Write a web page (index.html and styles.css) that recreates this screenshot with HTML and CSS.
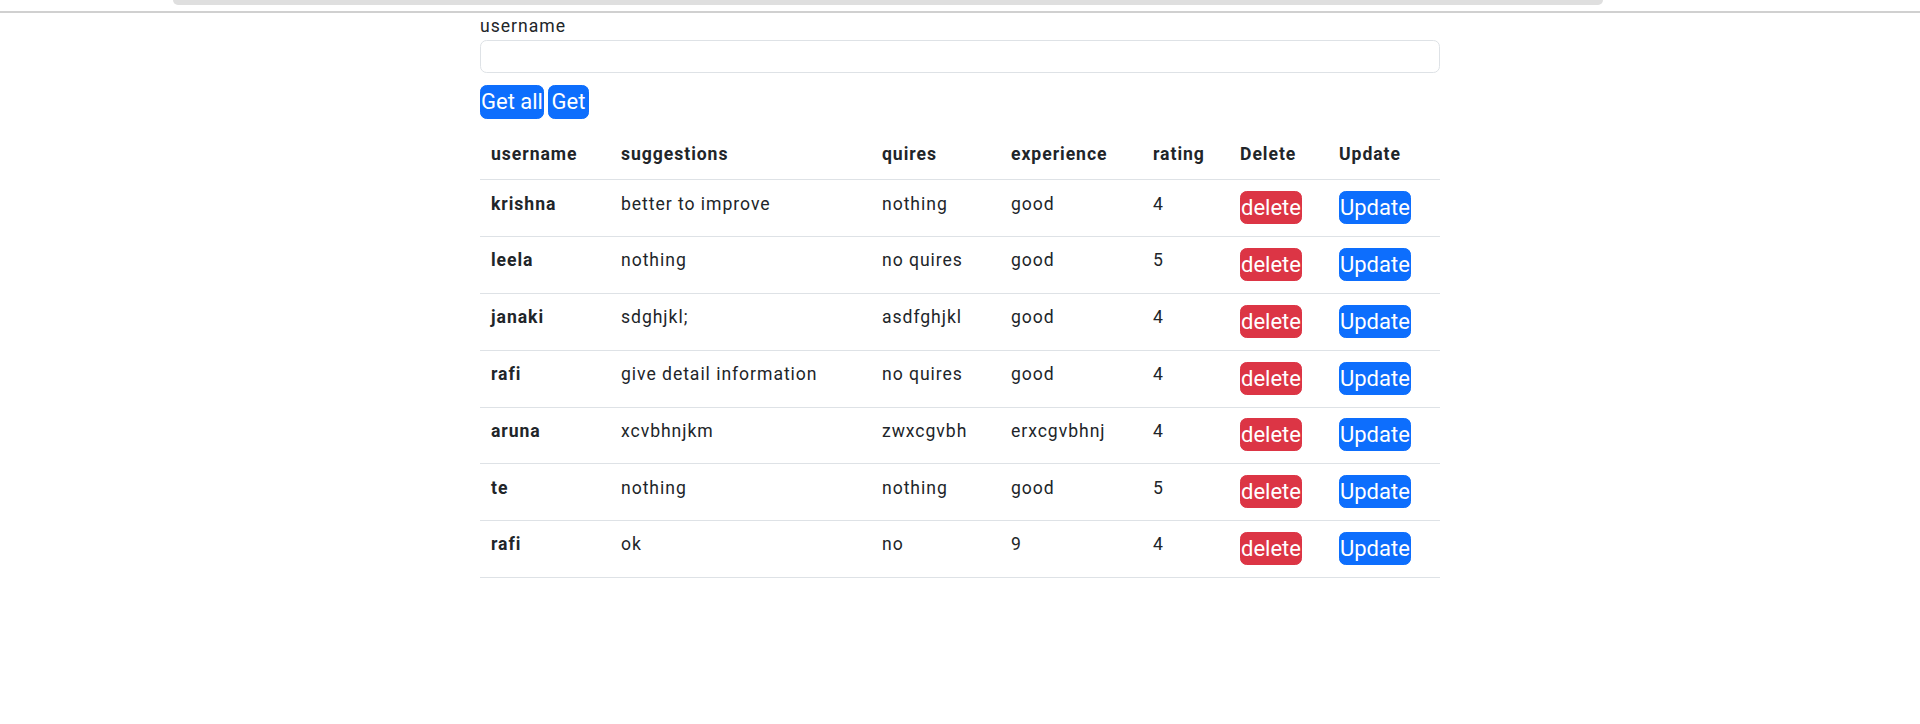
FILE: index.html
```html
<!DOCTYPE html>
<html lang="en">
<head>
<meta charset="utf-8">
<title>Feedback</title>
<link rel="stylesheet" href="styles.css">
</head>
<body>
<div class="topbar"></div>
<div class="rule"></div>
<main class="container">
  <label class="field-label" for="username">username</label>
  <input class="field-input" id="username" type="text">
  <div class="actions">
    <button class="btn btn-blue btn-wide">Get all</button>
    <button class="btn btn-blue btn-get">Get</button>
  </div>
  <table class="data">
    <colgroup>
      <col class="c1"><col class="c2"><col class="c3"><col class="c4"><col class="c5"><col class="c6"><col class="c7">
    </colgroup>
    <thead>
      <tr><th>username</th><th>suggestions</th><th>quires</th><th>experience</th><th>rating</th><th>Delete</th><th>Update</th></tr>
    </thead>
    <tbody>
      <tr><th>krishna</th><td>better to improve</td><td>nothing</td><td>good</td><td>4</td><td><button class="btn btn-red">delete</button></td><td><button class="btn btn-blue">Update</button></td></tr>
      <tr><th>leela</th><td>nothing</td><td>no quires</td><td>good</td><td>5</td><td><button class="btn btn-red">delete</button></td><td><button class="btn btn-blue">Update</button></td></tr>
      <tr><th>janaki</th><td>sdghjkl;</td><td>asdfghjkl</td><td>good</td><td>4</td><td><button class="btn btn-red">delete</button></td><td><button class="btn btn-blue">Update</button></td></tr>
      <tr><th>rafi</th><td>give detail information</td><td>no quires</td><td>good</td><td>4</td><td><button class="btn btn-red">delete</button></td><td><button class="btn btn-blue">Update</button></td></tr>
      <tr><th>aruna</th><td>xcvbhnjkm</td><td>zwxcgvbh</td><td>erxcgvbhnj</td><td>4</td><td><button class="btn btn-red">delete</button></td><td><button class="btn btn-blue">Update</button></td></tr>
      <tr><th>te</th><td>nothing</td><td>nothing</td><td>good</td><td>5</td><td><button class="btn btn-red">delete</button></td><td><button class="btn btn-blue">Update</button></td></tr>
      <tr><th>rafi</th><td>ok</td><td>no</td><td>9</td><td>4</td><td><button class="btn btn-red">delete</button></td><td><button class="btn btn-blue">Update</button></td></tr>
    </tbody>
  </table>
</main>
</body>
</html>
```

FILE: styles.css
```css
html, body {
  margin: 0;
  padding: 0;
  background: #ffffff;
}
body {
  font-family: Roboto, "Liberation Sans", Arial, sans-serif;
  font-size: 17.6px;
  line-height: 26.4px;
  color: #212529;
}
.topbar {
  height: 5px;
  margin: 0 317px 0 173px;
  background: #dfdfdf;
  border-radius: 0 0 22px 22px;
}
.rule {
  margin-top: 6px;
  height: 2px;
  background: #d0d0d0;
}
.container {
  width: 960px;
  margin: 0 auto;
}
.field-label {
  display: block;
  letter-spacing: 1px;
}
.field-input {
  display: block;
  box-sizing: border-box;
  width: 100%;
  height: 33px;
  margin: 1px 0 0;
  padding: 0 12px;
  border: 1px solid #dee2e6;
  border-radius: 6.6px;
  font: inherit;
  outline: none;
}
.actions {
  display: flex;
  gap: 4px;
  margin-top: 12px;
}
.btn {
  font-family: Roboto, "Liberation Sans", Arial, sans-serif;
  font-size: 22px;
  line-height: 31px;
  padding: 0;
  border-radius: 6.6px;
  color: #ffffff;
  cursor: pointer;
  display: block;
  letter-spacing: 0;
}
.actions .btn {
  line-height: 32px;
}
.btn-wide {
  padding: 0;
}
.btn-get {
  padding: 0 2.5px;
}
.btn-blue {
  background: #0d6efd;
  border: 1px solid #0d6efd;
}
.btn-red {
  background: #dc3545;
  border: 1px solid #dc3545;
}
.data {
  width: 960px;
  margin-top: 12.5px;
  border-collapse: collapse;
  table-layout: fixed;
  letter-spacing: 0.95px;
}
.c1 { width: 130px; }
.c2 { width: 261px; }
.c3 { width: 129px; }
.c4 { width: 142px; }
.c5 { width: 87px; }
.c6 { width: 99px; }
.c7 { width: 112px; }
.data th,
.data td {
  padding: 10.3px 11px 7.3px;
  text-align: left;
  vertical-align: top;
  border-bottom: 1px solid #dee2e6;
  font-weight: 400;
}
.data th {
  font-weight: 700;
}
.data thead th {
  padding-top: 8.8px;
  padding-bottom: 12.3px;
}
.data td .btn {
  margin: 0.5px 0 4.7px;
  letter-spacing: 0;
}
```
